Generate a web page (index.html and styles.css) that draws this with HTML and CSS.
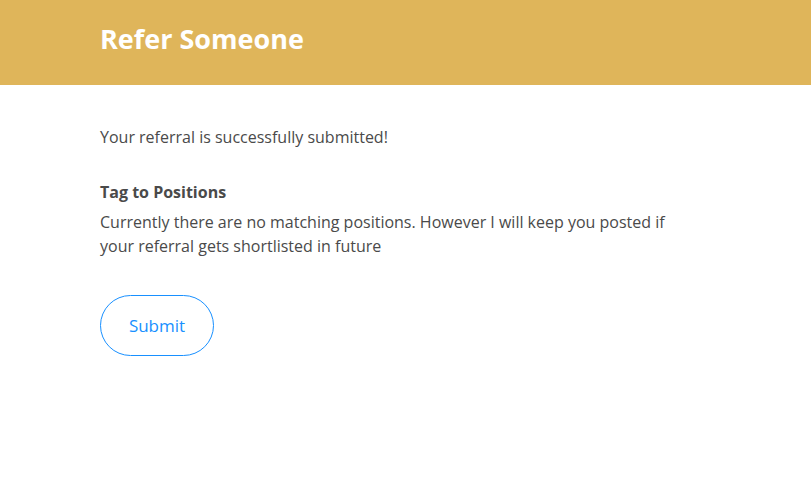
FILE: index.html
```html
<!DOCTYPE html>
<html>
<head>
<meta charset="utf-8">
<link rel="stylesheet" href="styles.css">
</head>
<body>
<header class="header">
  <h1 class="title">Refer Someone</h1>
</header>
<main class="content">
  <p class="success">Your referral is successfully submitted!</p>
  <h2 class="label">Tag to Positions</h2>
  <p class="info">Currently there are no matching positions. However I will keep you posted if your referral gets shortlisted in future</p>
  <button class="submit">Submit</button>
</main>
</body>
</html>
```
FILE: styles.css
```css
* { box-sizing: border-box; }
body {
  margin: 0;
  font-family: "Open Sans", "Lato", sans-serif;
  color: #4a4a4a;
  background: #fff;
}
.header {
  background: #dfb55a;
  height: 85px;
  padding: 0 100px 8px;
  display: flex;
  align-items: center;
}
.title {
  margin: 0;
  color: #fff;
  font-size: 27px;
  font-weight: 700;
}
.content {
  padding: 40px 100px 0;
  width: 780px;
}
.success {
  margin: 0;
  font-size: 16px;
  line-height: 24px;
}
.label {
  margin: 31px 0 6px;
  font-size: 16px;
  font-weight: 700;
  line-height: 24px;
}
.info {
  margin: 0;
  font-size: 16px;
  line-height: 24px;
}
.submit {
  margin-top: 37px;
  width: 114px;
  height: 61px;
  border: 1px solid #1890ff;
  border-radius: 31px;
  background: #fff;
  color: #1890ff;
  font-family: inherit;
  font-size: 17px;
}
```
